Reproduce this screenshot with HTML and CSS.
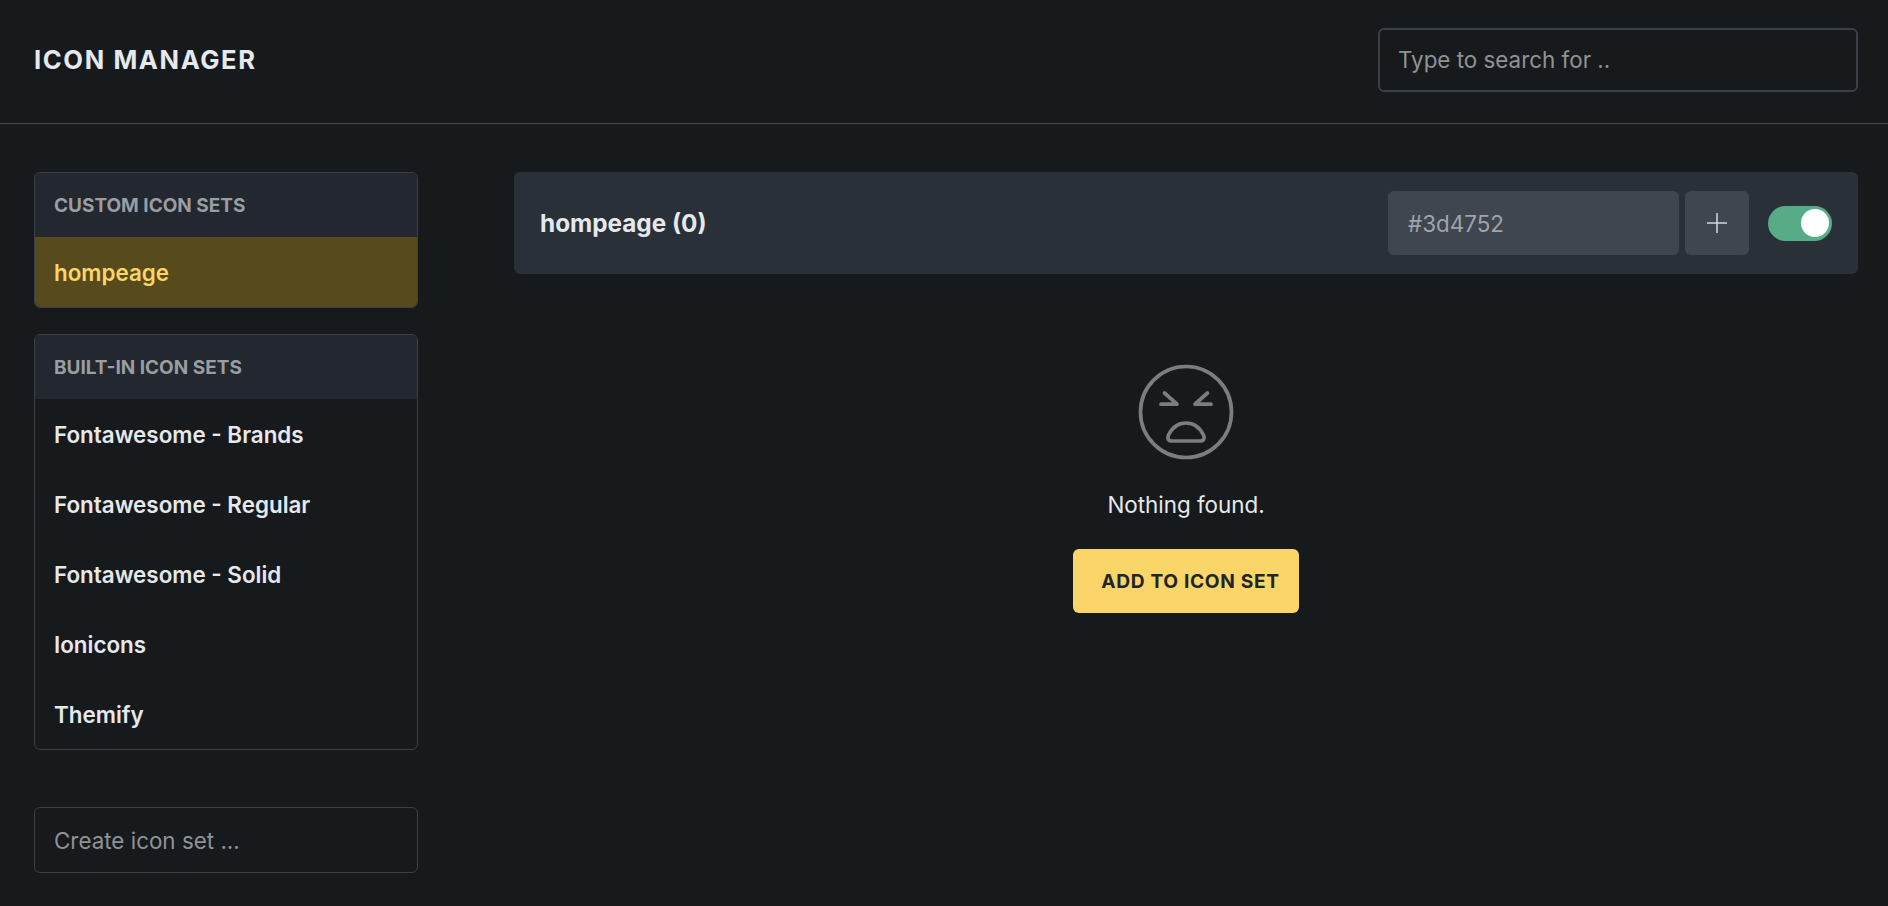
FILE: index.html
```html
<!DOCTYPE html>
<html lang="en">
<head>
<meta charset="utf-8">
<title>Icon Manager</title>
<link rel="stylesheet" href="styles.css">
</head>
<body>
<header class="topbar">
  <h1 class="brand">ICON MANAGER</h1>
  <input class="search" type="text" placeholder="Type to search for ..">
</header>
<div class="content">
  <aside class="sidebar">
    <section class="card">
      <h2 class="card-title">CUSTOM ICON SETS</h2>
      <a class="item item-active">hompeage</a>
    </section>
    <section class="card">
      <h2 class="card-title">BUILT-IN ICON SETS</h2>
      <a class="item">Fontawesome - Brands</a>
      <a class="item">Fontawesome - Regular</a>
      <a class="item">Fontawesome - Solid</a>
      <a class="item">Ionicons</a>
      <a class="item">Themify</a>
    </section>
    <input class="create" type="text" placeholder="Create icon set ...">
  </aside>
  <main class="main">
    <div class="panel">
      <h2 class="panel-title">hompeage (0)</h2>
      <input class="color" type="text" placeholder="#3d4752">
      <button class="plus" type="button" aria-label="Add">
        <svg width="20" height="20" viewBox="0 0 20 20"><path d="M10 0V20M0 10H20" fill="none" stroke="#d5d8db" stroke-width="1.5"/></svg>
      </button>
      <span class="toggle"><span class="knob"></span></span>
    </div>
    <div class="empty">
      <svg class="face" width="96" height="96" viewBox="-48 -48 96 96" fill="none" stroke="#7b7e80" stroke-width="3.700" stroke-linecap="round" stroke-linejoin="round">
        <circle r="45.500"/>
        <path d="M-21.500-19-9-7.800H-25"/>
        <path d="M21.500-19 9-7.800H25"/>
        <path d="M-14 29H14C18 29 19 26 17.500 23 14 16 8 11 0 11S-14 16-17.500 23C-19 26-18 29-14 29Z"/>
      </svg>
      <p class="message">Nothing found.</p>
      <button class="add" type="button">ADD TO ICON SET</button>
    </div>
  </main>
</div>
</body>
</html>
```

FILE: styles.css
```css
* { box-sizing: border-box; }
html, body { height: 100%; }
body {
  margin: 0;
  background: #171a1d;
  color: #e5e9ed;
  font-family: Inter, "Liberation Sans", sans-serif;
  overflow: hidden;
}
input, button { font-family: inherit; }
input { outline: none; }
input::placeholder { color: #8f9295; opacity: 1; }

.topbar {
  height: 124px;
  display: flex;
  align-items: center;
  justify-content: space-between;
  padding: 0 30px 4px 34px;
  border-bottom: 1px solid #42454c;
}
.brand {
  margin: 0;
  font-size: 25.600px;
  font-weight: 700;
  letter-spacing: 1.600px;
}
.search {
  width: 480px;
  height: 64px;
  padding: 0 18px;
  background: transparent;
  border: 2px solid #3a4048;
  border-radius: 6px;
  color: #e5e9ed;
  font-size: 22.400px;
}

.content {
  display: flex;
  gap: 96px;
  padding: 48px 30px 0 34px;
}
.sidebar {
  flex: none;
  width: 384px;
  display: flex;
  flex-direction: column;
}
.card {
  border: 1px solid #3b3f48;
  border-radius: 6px;
  overflow: hidden;
  margin-bottom: 26px;
}
.card-title {
  margin: 0;
  height: 64px;
  padding-left: 19px;
  display: flex;
  align-items: center;
  background: #23272f;
  color: #9a9da1;
  font-size: 19px;
  font-weight: 700;
}
.item {
  display: flex;
  align-items: center;
  height: 70px;
  padding-left: 19px;
  color: #e5e9ed;
  font-size: 22.400px;
  font-weight: 600;
}
.item-active {
  background: #574a1d;
  color: #f9d667;
}
.create {
  margin-top: 31px;
  width: 384px;
  height: 66px;
  padding: 0 19px;
  background: transparent;
  border: 1px solid #3b3f48;
  border-radius: 6px;
  color: #e5e9ed;
  font-size: 22.400px;
}

.main { flex: 1; min-width: 0; }
.panel {
  height: 102px;
  display: flex;
  align-items: center;
  padding: 0 26px;
  background: #2a3038;
  border-radius: 6px;
}
.panel-title {
  margin: 0 auto 0 0;
  font-size: 24.300px;
  font-weight: 700;
}
.color {
  width: 291px;
  height: 64px;
  padding: 0 20px;
  background: #3f4650;
  border: 0;
  border-radius: 6px;
  color: #e5e9ed;
  font-size: 22.400px;
}
.color::placeholder { color: #a0a4a9; }
.plus {
  width: 64px;
  height: 64px;
  margin: 0 19px 0 6px;
  padding: 0;
  display: flex;
  align-items: center;
  justify-content: center;
  background: #3f4650;
  border: 0;
  border-radius: 6px;
}
.toggle {
  width: 64px;
  height: 35px;
  padding-right: 3px;
  display: flex;
  align-items: center;
  justify-content: flex-end;
  background: #57ab87;
  border-radius: 18px;
}
.knob {
  width: 28px;
  height: 28px;
  background: #fff;
  border-radius: 50%;
}

.empty {
  display: flex;
  flex-direction: column;
  align-items: center;
  padding-top: 90px;
}
.face { display: block; }
.message {
  margin: 31px 0 0;
  font-size: 22.400px;
  line-height: 28px;
  color: #e5e9ed;
}
.add {
  margin-top: 30px;
  height: 64px;
  width: 226px;
  padding: 0 0 0 9px;
  background: #f9d667;
  border: 0;
  border-radius: 6px;
  color: #212529;
  font-size: 19.200px;
  font-weight: 700;
  letter-spacing: 0.640px;
}
```
